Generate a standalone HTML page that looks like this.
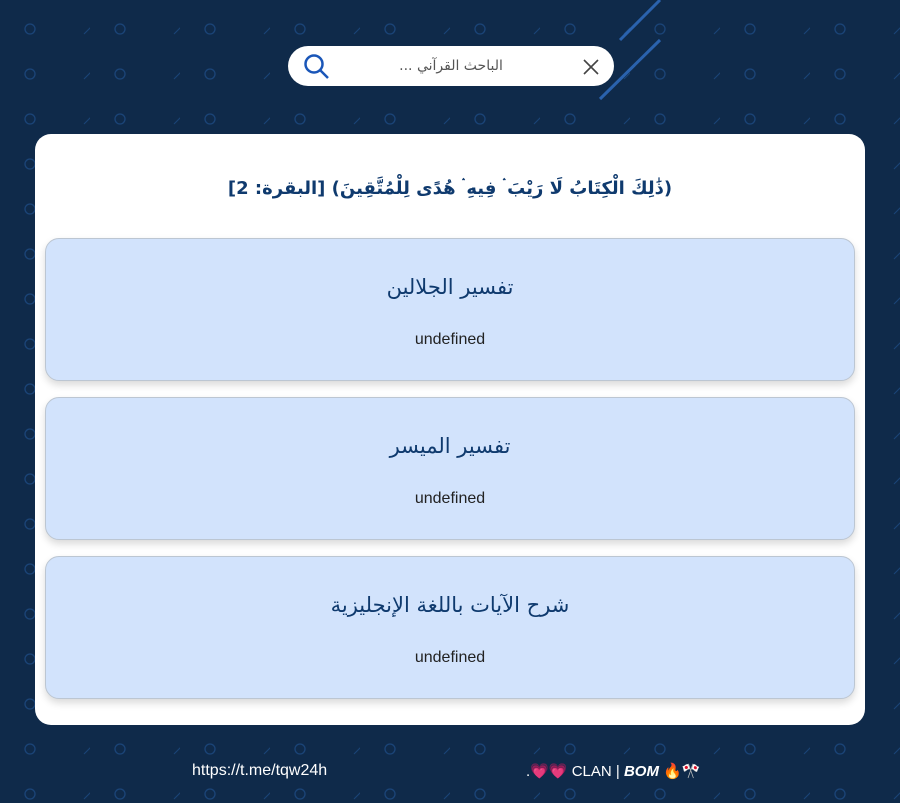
<!DOCTYPE html>
<html><head><meta charset="utf-8"><style>
*{margin:0;padding:0;box-sizing:border-box}
body{width:900px;height:803px;overflow:hidden;background:#0f2a4a;font-family:"Liberation Sans","Noto Sans CJK SC",sans-serif;position:relative}
.bg{position:absolute;inset:0}
.search{position:absolute;left:288px;top:46px;width:326px;height:40px;background:#fff;border-radius:20px}
.search .ph{position:absolute;left:0;right:0;top:12px;text-align:center;font-size:14px;color:#555;direction:rtl;font-family:"DejaVu Sans",sans-serif}
.card{position:absolute;left:35px;top:134px;width:830px;height:591px;background:#fff;border-radius:16px}
.verse{position:absolute;left:0;right:0;top:44px;text-align:center;direction:rtl;color:#0f3a6e;font-size:18px;font-weight:bold;font-family:"DejaVu Sans",serif}
.item{position:absolute;left:10px;width:810px;height:143px;background:#d2e3fc;border:1px solid #bcc6d2;border-radius:14px;box-shadow:0 4px 8px rgba(0,0,0,.15)}
.item .t{position:absolute;left:0;right:0;top:36px;text-align:center;font-size:21px;color:#0f3a6e;direction:rtl;font-family:"DejaVu Sans",sans-serif}
.item .u{position:absolute;left:0;right:0;top:92px;text-align:center;font-size:16px;color:#222}
.foot{position:absolute;top:762px;color:#fff;font-size:16px}
</style></head><body>
<svg class="bg" width="900" height="803">
<defs><pattern id="p" width="90" height="45" patternUnits="userSpaceOnUse" x="0" y="7">
<circle cx="30" cy="22" r="5" fill="none" stroke="#1a4478" stroke-width="1.3"/>
<line x1="84" y1="27" x2="94" y2="17" stroke="#1a4478" stroke-width="1"/>
</pattern></defs>
<rect width="900" height="803" fill="url(#p)"/>
<line x1="620" y1="40" x2="660" y2="0" stroke="#2a62ad" stroke-width="3"/>
<line x1="600" y1="99" x2="660" y2="40" stroke="#2a62ad" stroke-width="3"/>
</svg>
<div class="search">
<svg style="position:absolute;left:15px;top:7px" width="28" height="28" viewBox="0 0 28 28"><circle cx="11" cy="11" r="8.5" fill="none" stroke="#1a56b8" stroke-width="2.5"/><line x1="17" y1="17" x2="25" y2="25" stroke="#1a56b8" stroke-width="2.5"/></svg>
<div class="ph">الباحث القرآني ...</div>
<svg style="position:absolute;left:295px;top:13px" width="16" height="16"><path d="M1 1L15 15M15 1L1 15" stroke="#444" stroke-width="1.6"/></svg>
</div>
<div class="card">
<div class="verse">(ذَٰلِكَ الْكِتَابُ لَا رَيْبَ ۛ فِيهِ ۛ هُدًى لِلْمُتَّقِينَ) [البقرة: 2]</div>
<div class="item" style="top:104px"><div class="t">تفسير الجلالين</div><div class="u">undefined</div></div>
<div class="item" style="top:263px"><div class="t">تفسير الميسر</div><div class="u">undefined</div></div>
<div class="item" style="top:422px"><div class="t">شرح الآيات باللغة الإنجليزية</div><div class="u">undefined</div></div>
</div>
<div class="foot" style="left:192px">https://t.me/tqw24h</div>
<div class="foot" style="left:526px;font-size:15px">.💗💗 CLAN | <b><i>BOM</i></b> 🔥🎌</div>
</body></html>
